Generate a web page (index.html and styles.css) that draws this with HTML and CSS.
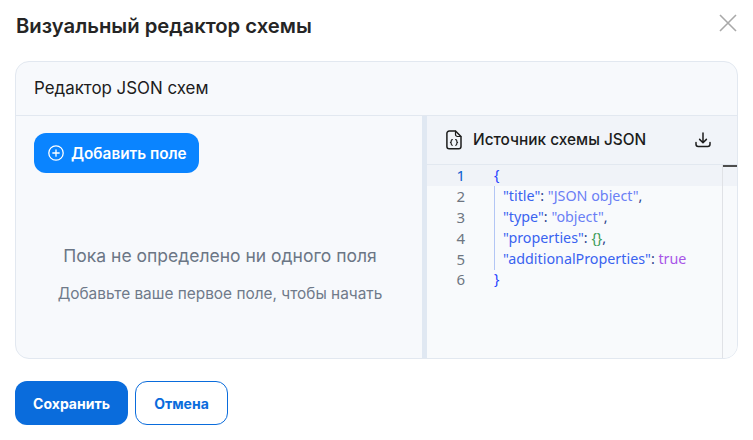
FILE: index.html
```html
<!DOCTYPE html>
<html lang="ru">
<head>
<meta charset="utf-8">
<title>Визуальный редактор схемы</title>
<link rel="stylesheet" href="styles.css">
</head>
<body>
<div class="dialog">
  <header class="dialog-head">
    <h1 class="dialog-title">Визуальный редактор схемы</h1>
    <button class="close" aria-label="Закрыть">
      <svg width="18" height="18" viewBox="0 0 18 18"><path d="M1 1 17 17M17 1 1 17" stroke="#a9a9a9" stroke-width="1.6" fill="none"/></svg>
    </button>
  </header>
  <section class="card">
    <div class="card-head">Редактор JSON схем</div>
    <div class="card-body">
      <div class="left">
        <button class="add">
          <svg width="16" height="16" viewBox="0 0 16 16" fill="none" stroke="#fff" stroke-width="1.3" stroke-linecap="round"><circle cx="8" cy="8" r="7.2"/><path d="M8 4.8v6.4M4.8 8h6.4"/></svg>
          Добавить поле
        </button>
        <div class="empty">
          <p class="empty-title">Пока не определено ни одного поля</p>
          <p class="empty-sub">Добавьте ваше первое поле, чтобы начать</p>
        </div>
      </div>
      <div class="right">
        <div class="src-head">
          <svg class="file-ico" width="16" height="20" viewBox="0 0 16 20" fill="none" stroke="#1c1c1c" stroke-width="1.5" stroke-linejoin="round" stroke-linecap="round"><path d="M3.2 1h6.3L15 6.5V16.5a2.3 2.3 0 0 1-2.3 2.3H3.2A2.3 2.3 0 0 1 .9 16.5V3.3A2.3 2.3 0 0 1 3.2 1Z"/><path d="M9.5 1.2V4.5a2 2 0 0 0 2 2h3.3" stroke-width="1.2"/><path d="M6.4 9.6c-1 0-1.2.5-1.2 1.2v.7c0 .5-.3.8-.8.9.5.1.8.4.8.9v.7c0 .7.2 1.2 1.2 1.2M9.6 9.6c1 0 1.2.5 1.2 1.2v.7c0 .5.3.8.8.9-.5.1-.8.4-.8.9v.7c0 .7-.2 1.2-1.2 1.2" stroke-width="1.1"/></svg>
          <span class="src-title">Источник схемы JSON</span>
          <svg class="dl-ico" width="16" height="16" viewBox="0 0 16 16" fill="none" stroke="#1c1c1c" stroke-width="1.5" stroke-linecap="round" stroke-linejoin="round"><path d="M8 1v9.5M4.6 7.4 8 10.8l3.4-3.4"/><path d="M1 10.5v1.8A2.2 2.2 0 0 0 3.2 14.5h9.6A2.2 2.2 0 0 0 15 12.3v-1.8"/></svg>
        </div>
        <div class="editor">
          <div class="code">
            <div class="line current"><span class="num active">1</span><span class="txt"><span class="br">{</span></span></div>
            <div class="line"><span class="num">2</span><span class="txt ind"><span class="key">"title"</span><span class="p">: </span><span class="str">"JSON object"</span><span class="p">,</span></span></div>
            <div class="line"><span class="num">3</span><span class="txt ind"><span class="key">"type"</span><span class="p">: </span><span class="str">"object"</span><span class="p">,</span></span></div>
            <div class="line"><span class="num">4</span><span class="txt ind"><span class="key">"properties"</span><span class="p">: </span><span class="br2">{}</span><span class="p">,</span></span></div>
            <div class="line"><span class="num">5</span><span class="txt ind"><span class="key">"additionalProperties"</span><span class="p">: </span><span class="bool">true</span></span></div>
            <div class="line"><span class="num">6</span><span class="txt"><span class="br">}</span></span></div>
          </div>
          <div class="ruler"><span class="ruler-mark"></span></div>
        </div>
      </div>
    </div>
  </section>
  <footer class="actions">
    <button class="btn primary">Сохранить</button>
    <button class="btn ghost">Отмена</button>
  </footer>
</div>
</body>
</html>
```
FILE: styles.css
```css
* { box-sizing: border-box; }
html, body { margin: 0; padding: 0; background: #fff; }
body { width: 753px; height: 440px; overflow: hidden; font-family: Inter, "Liberation Sans", sans-serif; }
button { font-family: inherit; cursor: pointer; }
.dialog { padding: 0 15px; }
.dialog-head { height: 61px; display: flex; align-items: flex-start; justify-content: space-between; }
.dialog-title { margin: 13px 0 0 1px; font-size: 20.25px; line-height: 26px; font-weight: 600; color: #252525; }
.close { border: 0; background: none; padding: 0; width: 18px; height: 18px; margin: 14px 1px 0 0; display: block; }
.close svg { display: block; }
.card { width: 723px; height: 298px; border: 1px solid #e2e8f0; border-radius: 14px; background: #f7f9fc; overflow: hidden; display: flex; flex-direction: column; }
.card-head { height: 54px; flex: none; padding: 0 0 2px 18px; display: flex; align-items: center; border-bottom: 1px solid #e2e8f0; font-size: 16.9px; font-weight: 400; color: #1c1c1c; }
.card-body { flex: 1; display: flex; min-height: 0; }
.left { width: 406px; flex: none; padding: 17px 18px 0; display: flex; flex-direction: column; }
.add { width: 165px; height: 40px; border: 0; border-radius: 12px; background: #0a84ff; color: #fff; font-size: 15.3px; font-weight: 600; display: flex; align-items: center; gap: 7px; padding: 0 0 0 14px; }
.empty { text-align: center; margin: 0 -18px; padding-left: 2px; }
.empty-title { margin: 72px 0 0; font-size: 17.5px; line-height: 22px; color: #6b7685; }
.empty-sub { margin: 17px 0 0; font-size: 15.4px; line-height: 20px; color: #6f7a8a; }
.right { flex: 1; min-width: 0; border-left: 5px solid #e0e8f2; display: flex; flex-direction: column; }
.src-head { height: 49px; flex: none; background: #f1f4f9; border-bottom: 1px solid #e2e8f0; display: flex; align-items: center; padding: 0 26px 0 19px; }
.file-ico { flex: none; margin-right: 11px; }
.src-title { font-size: 15.4px; font-weight: 450; color: #1c1c1c; flex: 1; padding-bottom: 1px; }
.dl-ico { flex: none; }
.editor { flex: 1; display: flex; background: #f8fafc; min-height: 0; }
.code { flex: 1; font-family: "Noto Sans", "Open Sans", sans-serif; font-size: 14.3px; line-height: 20.8px; }
.line { height: 21px; display: flex; }
.line:last-child { margin-top: -1px; }
.line.current { background: #f0f3f8; margin-right: -16px; position: relative; }
.num { width: 38px; flex: none; text-align: right; color: #6e7681; font-size: 15px; }
.num.active { color: #0b5fd0; }
.txt { margin-left: 29px; padding-left: 0; white-space: pre; }
.txt.ind { border-left: 1px solid #b3c6f5; padding-left: 8px; }
.br { color: #1f3fff; }
.key { color: #3a63f0; }
.str { color: #6a7ff5; }
.p { color: #2d3f8c; }
.br2 { color: #3a9a55; }
.bool { color: #a855e8; }
.ruler { width: 15px; flex: none; border-left: 1px solid #e0e2e6; position: relative; }
.ruler-mark { position: absolute; left: 0; right: 0; top: 0; height: 2px; background: #4d4d4d; }
.actions { display: flex; gap: 7px; margin-top: 22px; }
.btn { height: 44px; border-radius: 12px; font-size: 14px; font-weight: 700; padding: 0; }
.primary { width: 113px; border: 0; background: #0a6cdc; color: #fff; }
.ghost { width: 93px; border: 1px solid #0a6cdc; background: #fff; color: #0a6cdc; }
```
